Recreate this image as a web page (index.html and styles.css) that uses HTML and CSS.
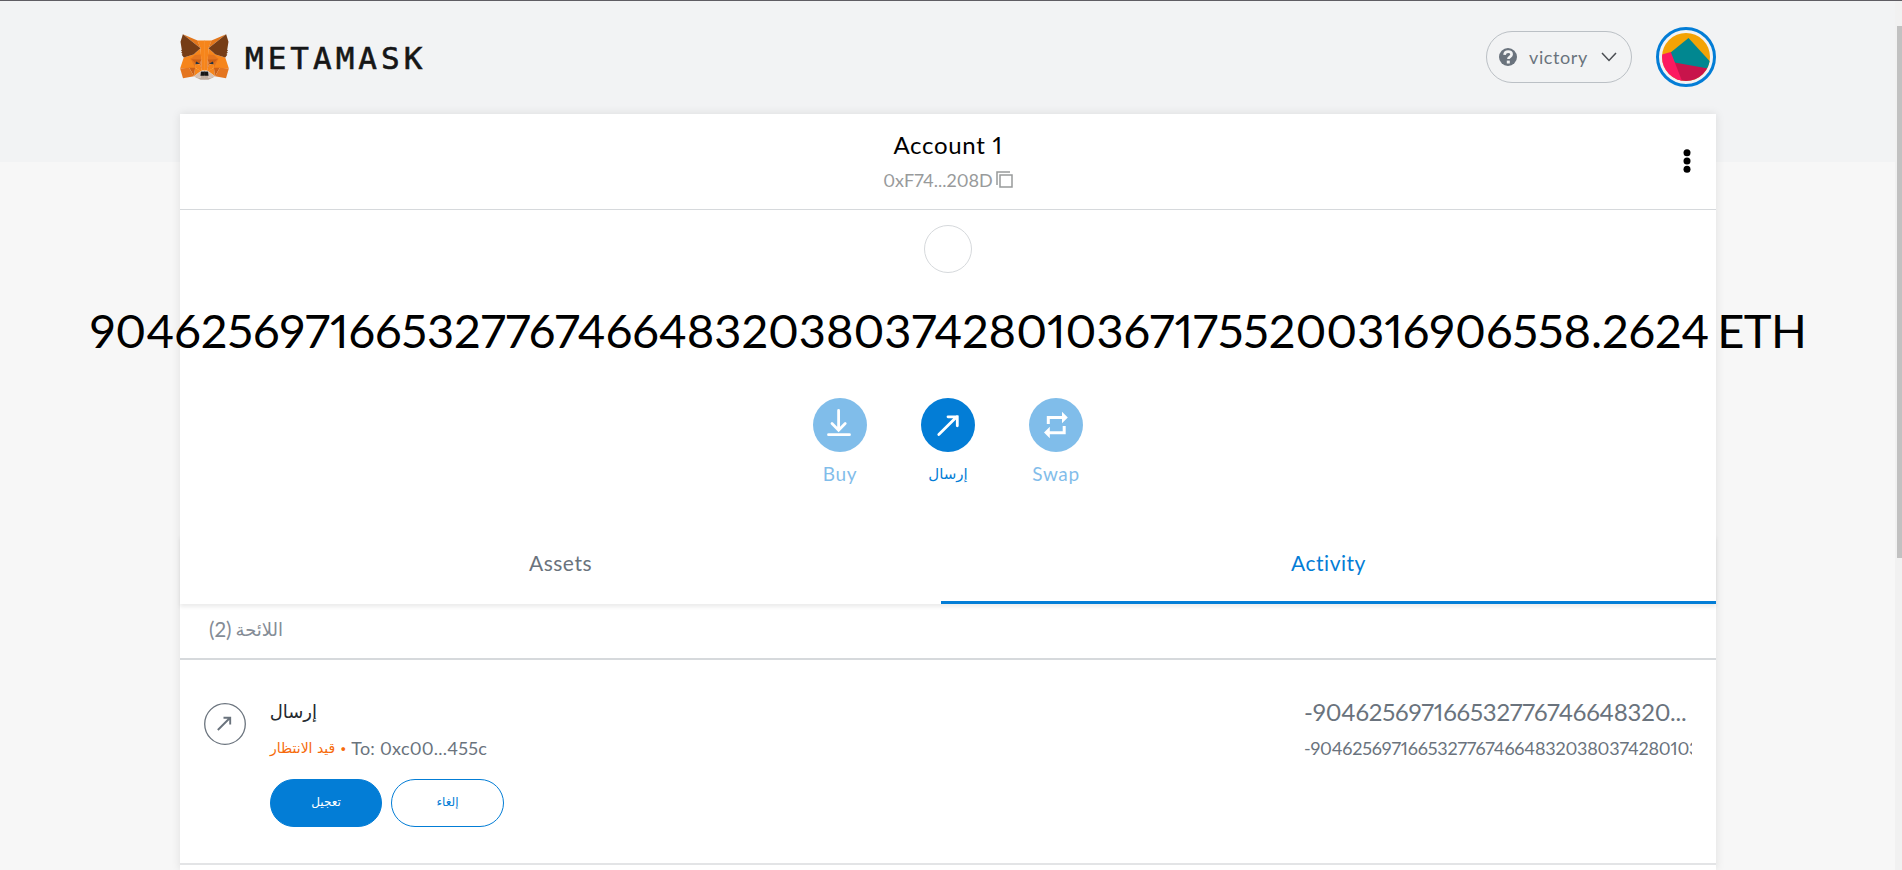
FILE: index.html
```html
<!DOCTYPE html>
<html lang="en">
<head>
<meta charset="utf-8">
<title>MetaMask</title>
<link rel="stylesheet" href="styles.css">
</head>
<body>
<div class="window">
<div class="app">
  <header class="header">
    <div class="brand">
      <svg class="fox" viewBox="0 0 212 189" preserveAspectRatio="none">
        <defs>
          <g id="half">
            <polygon fill="#c0ad9e" points="60.75 173.25 88.3 180.5 88.3 171 90.5 168.7 107 168.7 107 188 89.4 188 68.6 178.8"/>
            <polygon fill="#f6851b" points="75.4 27 88.9 58.5 95 150.2 107 150.2 107 27"/>
            <polygon fill="#f6851b" points="16.3 96.2 .6 141.75 39.9 139.5 65.25 139.5 65.25 119.8 64.1 79.3 58.5 83.8"/>
            <polygon fill="#f6851b" points="88.9 58.5 64.7 78.75 46.1 101.25 92.25 102.9"/>
            <polygon fill="#cd6116" points="46.1 101.25 92.25 102.4 87.2 126 65.25 120.4"/>
            <polygon fill="#e4751f" points="46.1 101.8 65.25 119.8 65.25 137.8"/>
            <polygon fill="#e4751f" points="64.7 86 46.1 104 92.25 105 89 84"/>
            <polygon fill="#f6851b" points="65.25 120.4 87.75 126 95 150.2 90 153 65.25 138.4"/>
            <polygon fill="#f6851b" points="65.25 138.4 60.75 173.25 90.5 152.4"/>
            <polygon fill="#e4751f" points="92.25 102.4 95 150.2 86.6 125.7"/>
            <polygon fill="#cd6116" points="39.4 138.9 65.25 138.4 60.75 173.25"/>
            <polygon fill="#e4751f" points="12.9 182 60.75 173.25 39.4 138.9 .6 141.75"/>
            <polygon fill="#d7c1b3" points="60.75 173.25 90.5 152.4 88.3 170.4 88.3 180.5 68 176.6"/>
            <polygon fill="#233447" points="70.3 112.5 66 124.4 86 122"/>
            <polygon fill="#161616" points="90.5 154 88.3 172 91 172 107 172 107 154"/>
            <polygon fill="#e2761b" points="12.4 .6 88.9 58.5 75.9 27"/>
            <polygon fill="#763d16" points="12.4 .6 2.25 31.5 7.9 65.25 3.9 67.5 9.6 72.6 5 76.5 11.25 82.1 7.3 85.5 16.3 96.75 58.5 83.8 88.9 58.5"/>
          </g>
        </defs>
        <use href="#half"/>
        <use href="#half" transform="matrix(-1 0 0 1 212 0)"/>
      </svg>
      <span class="wordmark">METAMASK</span>
    </div>
    <div class="header-right">
      <div class="network">
        <svg class="question" viewBox="0 0 18 18"><circle cx="9" cy="9" r="9" fill="#6a737d"/><path d="M5.500 6.800C5.800 4.500 7.200 3.700 9.100 3.700c2 0 3.500 1.100 3.500 2.800 0 2.300-3.200 2.200-3.200 4.400" fill="none" stroke="#f2f3f4" stroke-width="2.700"/><rect x="7.800" y="12.600" width="3" height="2.900" fill="#f2f3f4"/></svg>
        <span class="network-name">victory</span>
        <svg class="chevron" viewBox="0 0 16 10"><path d="M1 1l7 7.500L15 1" fill="none" stroke="#4a4d52" stroke-width="1.500"/></svg>
      </div>
      <div class="avatar">
        <svg viewBox="0 0 48 48"><defs><clipPath id="round"><circle cx="24" cy="24" r="24"/></clipPath></defs><g clip-path="url(#round)"><rect width="48" height="48" fill="#f3a305"/><path d="M12 28l34 7-4 13H14z" fill="#c8144b"/><path d="M26.500 5L48 28.500 46 35.500 12.500 29.500 8 20z" fill="#018790"/><path d="M0 21.500L8.800 19 20 48H0z" fill="#fc1960"/></g></svg>
      </div>
    </div>
  </header>

  <main class="card">
    <div class="menu-bar">
      <div class="account">
        <div class="account-name">Account 1</div>
        <div class="account-address"><span>0xF74...208D</span><svg class="copy" viewBox="0 0 17 17"><path d="M1 14V1h13M4 4h12v12H4z" fill="none" stroke="#989a9b" stroke-width="1.500"/></svg></div>
      </div>
      <svg class="dots" viewBox="0 0 8 24"><circle cx="4" cy="3.700" r="3.500"/><circle cx="4" cy="12" r="3.500"/><circle cx="4" cy="20.300" r="3.500"/></svg>
    </div>

    <section class="overview">
      <div class="token"></div>
      <div class="balance"><span class="balance-value">904625697166532776746648320380374280103671755200316906558.2624</span><span class="balance-unit">ETH</span></div>
      <div class="actions">
        <div class="action action-off">
          <svg class="action-icon" viewBox="0 0 54 54"><circle cx="27" cy="27" r="27" fill="#037dd6"/><path d="M25.600 12.500v19M19 25.500l6.600 6.700 6.600-6.700M15.500 36.700h21" fill="none" stroke="#fff" stroke-width="2.800" stroke-linecap="round"/></svg>
          <span>Buy</span>
        </div>
        <div class="action">
          <svg class="action-icon" viewBox="0 0 54 54"><circle cx="27" cy="27" r="27" fill="#037dd6"/><path d="M17.800 36.500L36 18.500M27 18.800h9.300v9" fill="none" stroke="#fff" stroke-width="2.800" stroke-linecap="round"/></svg>
          <span class="arabic" dir="rtl">إرسال</span>
        </div>
        <div class="action action-off">
          <svg class="action-icon" viewBox="0 0 54 54"><circle cx="27" cy="27" r="27" fill="#037dd6"/><path d="M19.300 26v-6.500H34M35.200 28v6.700H20" fill="none" stroke="#fff" stroke-width="3"/><path d="M33 13.800l5.800 5.700L33 25.200zM20.800 28.800L15 34.500l5.800 5.700z" fill="#fff"/></svg>
          <span>Swap</span>
        </div>
      </div>
    </section>

    <nav class="tabs">
      <div class="tab tab-assets">Assets</div>
      <div class="tab tab-activity">Activity</div>
    </nav>

    <section class="queue">
      <div class="queue-title"><span>(2)</span><span class="arabic" dir="rtl">اللائحة</span></div>
      <article class="item">
        <svg class="item-icon" viewBox="0 0 42 42"><circle cx="21" cy="21" r="20.300" fill="none" stroke="#6a737d" stroke-width="1.300"/><path d="M13.800 27L25.800 15M19.500 14.700h6.700v6.800" fill="none" stroke="#6a737d" stroke-width="1.900"/></svg>
        <div class="item-main">
          <div class="item-title arabic" dir="rtl">إرسال</div>
          <div class="item-sub"><span class="pending arabic" dir="rtl">قيد الانتظار</span><span class="sep">·</span><span class="recipient">To: 0xc00...455c</span></div>
          <div class="item-buttons">
            <div class="button button-primary arabic" dir="rtl">تعجيل</div>
            <div class="button button-secondary arabic" dir="rtl">إلغاء</div>
          </div>
        </div>
        <div class="item-amount">
          <div class="amount-main">-904625697166532776746648320...</div>
          <div class="amount-sub">-904625697166532776746648320380374280103</div>
        </div>
      </article>
    </section>
  </main>
</div>
<div class="scrollbar"><div class="thumb"></div></div>
</div>
</body>
</html>
```
FILE: styles.css
```css
* { box-sizing: border-box; }
body {
  margin: 0;
  height: 870px;
  overflow: hidden;
  font-family: Lato, sans-serif;
  font-variant-numeric: proportional-nums;
  font-variant-ligatures: none;
  color: #000;
}
.window {
  display: flex;
  height: 870px;
  border-top: 1px solid #5f5d63;
  background: #f7f7f7;
}
.app {
  width: 1895px;
  padding: 0 179px 0 180px;
  background: linear-gradient(#f2f3f4 161px, #f7f7f7 161px);
}
.scrollbar {
  width: 7px;
  padding: 25px 0 0 2px;
  background: #f1f1f1;
}
.thumb { height: 532px; background: #c1c1c1; }

.header {
  height: 113px;
  padding-bottom: 1px;
  display: flex;
  align-items: center;
  justify-content: space-between;
}
.brand, .header-right { display: flex; align-items: center; }
.fox { width: 49px; height: 46px; }
.wordmark {
  margin-left: 16px;
  padding-top: 1px;
  font: 31px/40px "DejaVu Sans Mono", monospace;
  letter-spacing: 4px;
  color: #161616;
  -webkit-text-stroke: 0.6px #161616;
}
.network {
  width: 146px;
  height: 52px;
  padding: 0 14px 0 12px;
  border: 1px solid #bbc0c5;
  border-radius: 26px;
  display: flex;
  align-items: center;
  color: #6a737d;
}
.question { width: 18px; height: 18px; }
.network-name {
  margin-left: 12px;
  width: 60px;
  font-size: 18px;
  letter-spacing: 0.6px;
  white-space: nowrap;
}
.chevron { width: 16px; height: 10px; margin-left: 12px; }
.avatar {
  width: 60px;
  height: 60px;
  margin-left: 24px;
  padding: 3px;
  border: 3px solid #037dd6;
  border-radius: 50%;
}
.avatar svg { display: block; width: 48px; height: 48px; }

.card {
  width: 1536px;
  height: 756px;
  background: #fff;
  box-shadow: 0 0 9px rgba(0, 0, 0, 0.1);
}
.menu-bar {
  height: 96px;
  padding: 0 25px;
  border-bottom: 1px solid #d6d9dc;
  display: grid;
  grid-template-columns: 8px 1fr 8px;
  align-items: center;
}
.account { grid-column: 2; text-align: center; }
.account-name { font-size: 24px; line-height: 34px; letter-spacing: 0.7px; }
.account-address {
  display: flex;
  justify-content: center;
  align-items: center;
  gap: 3px;
  height: 34px;
  padding-top: 2px;
  font-size: 18px;
  color: #989a9b;
}
.copy { width: 17px; height: 17px; }
.dots { width: 8px; height: 24px; margin-bottom: 2px; }

.overview {
  height: 325px;
  padding-top: 15px;
  display: flex;
  flex-direction: column;
  align-items: center;
}
.token { width: 48px; height: 48px; border: 1px solid #d6d9dc; border-radius: 50%; }
.balance {
  height: 60px;
  margin-top: 27px;
  display: flex;
  gap: 8px;
  font-size: 47px;
  line-height: 60px;
  white-space: nowrap;
}
.balance-value { letter-spacing: -0.04px; }
.balance-unit { letter-spacing: -0.6px; }
.actions { display: flex; margin-top: 38px; }
.action {
  width: 108px;
  display: flex;
  flex-direction: column;
  align-items: center;
  font-size: 19px;
  line-height: 24px;
  letter-spacing: 0.6px;
  color: #037dd6;
}
.action-off { opacity: 0.5; }
.action-icon { width: 54px; height: 54px; margin-bottom: 10px; }
.arabic { font-family: "DejaVu Sans", sans-serif; letter-spacing: 0; }
.action .arabic { font-size: 15px; }

.tabs {
  position: relative;
  display: flex;
  height: 69px;
  box-shadow: 0 3px 4px rgba(0, 0, 0, 0.08);
}
.tab {
  text-align: center;
  font-size: 21px;
  line-height: 56px;
  letter-spacing: 0.5px;
  border-bottom: 3px solid transparent;
}
.tab-assets { width: 761px; color: #6a737d; }
.tab-activity { width: 775px; color: #037dd6; border-color: #037dd6; }

.queue-title {
  height: 56px;
  padding: 0 0 4px 29px;
  display: flex;
  align-items: center;
  gap: 4px;
  border-bottom: 2px solid #d6d9dc;
  font-size: 20.5px;
  color: #848c96;
}
.queue-title .arabic { font-size: 18px; }
.item {
  height: 205px;
  padding: 35px 24px 0;
  display: flex;
  border-bottom: 2px solid #e3e4e6;
}
.item-icon { width: 42px; height: 42px; margin-top: 8px; }
.item-main { margin-left: 24px; flex: 1; }
.item-title { width: 47px; font-size: 18px; line-height: 34px; color: #24292e; white-space: nowrap; }
.item-sub { display: flex; height: 38px; align-items: center; font-size: 18px; color: #6a737d; }
.pending { font-size: 14px; color: #f66a0a; white-space: nowrap; }
.sep { width: 16px; text-align: center; color: #f66a0a; font-weight: 900; }
.recipient { letter-spacing: 0.25px; }
.item-buttons { display: flex; gap: 9px; margin-top: 12px; }
.button {
  width: 112px;
  height: 48px;
  border: 1px solid #037dd6;
  border-radius: 24px;
  text-align: center;
  font-size: 12px;
  line-height: 44px;
}
.button-primary { background: #037dd6; color: #fff; }
.button-secondary { width: 113px; color: #037dd6; }
.item-amount { width: 388px; overflow: hidden; color: #6a737d; white-space: nowrap; }
.amount-main { font-size: 24px; line-height: 34px; letter-spacing: -0.19px; }
.amount-sub { font-size: 18px; line-height: 38px; letter-spacing: -0.2px; }
```
